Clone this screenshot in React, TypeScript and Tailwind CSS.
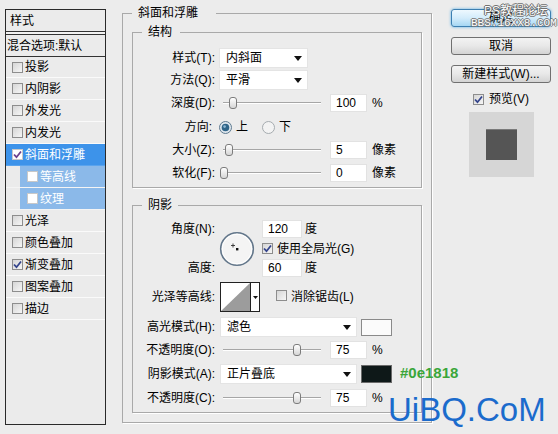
import React from "react";

const Tri = () => (
  <svg width="8" height="5" viewBox="0 0 8 5" className="shrink-0">
    <path d="M0 0H8L4 5Z" fill="#111" />
  </svg>
);

function Box({ checked = false, white = false, color = "#34448c" }: { checked?: boolean; white?: boolean; color?: string }) {
  return (
    <span
      className={
        white
          ? "inline-flex w-[11px] h-[11px] shrink-0 items-center justify-center border border-[#c8c8c8] bg-white"
          : "inline-flex w-[11px] h-[11px] shrink-0 items-center justify-center border border-[#8d8d8d] bg-linear-to-br from-[#d6d6d6] to-[#f6f6f6]"
      }
    >
      {checked && (
        <svg width="9" height="9" viewBox="0 0 9 9">
          <path d="M1 4.5L3.5 7.2L8 1.5" fill="none" stroke={color} strokeWidth="1.8" />
        </svg>
      )}
    </span>
  );
}

function Slider({ thumb }: { thumb: string }) {
  return (
    <div className="relative ml-[8px] w-[98px] h-[14px] shrink-0">
      <div className="absolute left-0 right-0 top-[6px] h-[2px] border-t border-[#a6a6a6] border-b border-b-white" />
      <div className={"absolute top-[1px] w-[8px] h-[12px] rounded-[3px] border border-[#7c7c7c] bg-linear-to-b from-white to-[#d6d6d6] " + thumb} />
    </div>
  );
}

function Input({ v, w = "w-[37px]", ml = "ml-[9px]" }: { v: string; w?: string; ml?: string }) {
  return (
    <div className={"h-[18px] bg-white border border-[#e2e2e2] pl-[5px] flex items-center shrink-0 " + w + " " + ml}>{v}</div>
  );
}

function Label({ children }: { children: React.ReactNode }) {
  return <span className="w-[82px] shrink-0 text-right">{children}</span>;
}

function Select({ v, w }: { v: string; w: string }) {
  return (
    <div className={"h-[20px] bg-white border border-[#e4e4e4] flex items-center justify-between pl-[6px] pr-[5px] shrink-0 " + w}>
      <span>{v}</span>
      <Tri />
    </div>
  );
}

function Radio({ on }: { on: boolean }) {
  return (
    <svg width="13" height="13" viewBox="0 0 13 13" className="shrink-0">
      {on ? (
        <>
          <circle cx="6.5" cy="6.5" r="6" fill="#dfe7ee" stroke="#5f7b90" />
          <circle cx="6.5" cy="6.5" r="3.8" fill="#2f6488" />
          <circle cx="5.6" cy="5.6" r="1.3" fill="#8db6d2" />
        </>
      ) : (
        <circle cx="6.5" cy="6.5" r="6" fill="#f3f3f3" stroke="#a5abaf" />
      )}
    </svg>
  );
}

const items: { t: string; sel?: boolean; sub?: boolean; checked?: boolean }[] = [
  { t: "投影" },
  { t: "内阴影" },
  { t: "外发光" },
  { t: "内发光" },
  { t: "斜面和浮雕", sel: true, checked: true },
  { t: "等高线", sub: true },
  { t: "纹理", sub: true },
  { t: "光泽" },
  { t: "颜色叠加" },
  { t: "渐变叠加", checked: true },
  { t: "图案叠加" },
  { t: "描边" },
];

function LeftPanel() {
  return (
    <div className="ml-[5px] mt-[9px] w-[101px] h-[416px] shrink-0 border border-[#2a2a2a] bg-[#ebebeb] flex flex-col">
      <div className="h-[22px] border-b border-[#333] pl-[4px] flex items-center">样式</div>
      <div className="h-[2px] bg-[#f2f2f2]" />
      <div className="h-[23px] border-y border-[#333] pl-[1px] flex items-center">混合选项:默认</div>
      {items.map((it, i) => {
        const h = i === 0 ? "h-[21px]" : "h-[22px]";
        if (it.sel)
          return (
            <div key={it.t} className={h + " bg-[#3d93ea] text-white flex items-center gap-[2px] pl-[6px] border-b border-[#5aa4ee]"}>
              <Box checked white color="#6b3f8c" />
              <span>{it.t}</span>
            </div>
          );
        if (it.sub)
          return (
            <div key={it.t} className={h + " flex border-b border-[#f4f4f4]"}>
              <div className="ml-[14px] flex-1 bg-[#8bb9e9] text-white flex items-center gap-[2px] pl-[7px]">
                <Box white />
                <span>{it.t}</span>
              </div>
            </div>
          );
        return (
          <div key={it.t} className={h + " flex items-center gap-[2px] pl-[6px] border-b border-[#fafafa]"}>
            <Box checked={it.checked} />
            <span>{it.t}</span>
          </div>
        );
      })}
    </div>
  );
}

function Main() {
  return (
    <fieldset className="ml-[16px] mt-[5px] w-[310px] shrink-0 border border-[#a9a9a9] shadow-[1px_1px_0_#fff] min-w-0">
      <legend className="ml-[9px] pl-[6px] pr-[18px] leading-[16px]">斜面和浮雕</legend>
      <div className="px-[9px] pt-[3px] pb-[9px]">
        <fieldset className="border border-[#a9a9a9] shadow-[1px_1px_0_#fff] min-w-0">
          <legend className="ml-[9px] pl-[6px] pr-[8px] leading-[16px]">结构</legend>
          <div className="pt-[7px] pb-[2px] flex flex-col">
            <div className="h-[22px] flex items-center">
              <Label>样式(T):</Label>
              <div className="ml-[4px]"><Select v="内斜面" w="w-[89px]" /></div>
            </div>
            <div className="h-[22px] flex items-center">
              <Label>方法(Q):</Label>
              <div className="ml-[4px]"><Select v="平滑" w="w-[89px]" /></div>
            </div>
            <div className="h-[24px] flex items-center">
              <Label>深度(D):</Label>
              <Slider thumb="left-[6px]" />
              <Input v="100" />
              <span className="ml-[5px]">%</span>
            </div>
            <div className="h-[24px] flex items-center">
              <span className="w-[79px] shrink-0 text-right">方向:</span>
              <span className="ml-[7px]"><Radio on /></span>
              <span className="ml-[4px]">上</span>
              <span className="ml-[14px]"><Radio on={false} /></span>
              <span className="ml-[4px]">下</span>
            </div>
            <div className="h-[22px] flex items-center">
              <Label>大小(Z):</Label>
              <Slider thumb="left-[2px]" />
              <Input v="5" />
              <span className="ml-[5px]">像素</span>
            </div>
            <div className="h-[24px] flex items-center">
              <Label>软化(F):</Label>
              <Slider thumb="left-[-3px]" />
              <Input v="0" />
              <span className="ml-[5px]">像素</span>
            </div>
          </div>
        </fieldset>

        <fieldset className="mt-[9px] border border-[#a9a9a9] shadow-[1px_1px_0_#fff] min-w-0">
          <legend className="ml-[9px] pl-[6px] pr-[6px] leading-[16px]">阴影</legend>
          <div className="pt-[7px] pb-[2px] flex flex-col">
            <div className="h-[57px] flex items-center">
              <div className="w-[82px] h-[57px] shrink-0 flex flex-col justify-between items-end">
                <span className="h-[18px] leading-[18px]">角度(N):</span>
                <span className="h-[18px] leading-[18px]">高度:</span>
              </div>
              <svg width="36" height="36" viewBox="0 0 36 36" className="ml-[4px] shrink-0">
                <circle cx="18" cy="18" r="16.3" fill="#f4f4f4" stroke="#62768a" strokeWidth="1.6" />
                <circle cx="18" cy="18" r="14.8" fill="none" stroke="#ffffff" strokeWidth="1" />
                <path d="M14 12.5V16.5M12 14.5H16" stroke="#333" strokeWidth="0.9" />
                <rect x="17" y="17" width="2.4" height="2.4" fill="#111" />
              </svg>
              <div className="ml-[7px] flex flex-col">
                <div className="h-[18px] flex items-center">
                  <Input v="120" w="w-[40px]" ml="ml-0" />
                  <span className="ml-[3px]">度</span>
                </div>
                <div className="h-[21px] flex items-center">
                  <Box checked />
                  <span className="ml-[4px]">使用全局光(G)</span>
                </div>
                <div className="h-[18px] flex items-center">
                  <Input v="60" w="w-[40px]" ml="ml-0" />
                  <span className="ml-[3px]">度</span>
                </div>
              </div>
            </div>
            <div className="mt-[5px] h-[30px] flex items-center">
              <Label>光泽等高线:</Label>
              <div className="ml-[5px] w-[40px] h-[30px] border border-[#222] flex bg-white shrink-0">
                <svg width="29" height="28" viewBox="0 0 29 28" className="shrink-0">
                  <path d="M0 28L29 0V28Z" fill="#9c9c9c" />
                </svg>
                <div className="flex-1 border-l border-[#222] flex items-center justify-center">
                  <svg width="5" height="3" viewBox="0 0 5 3"><path d="M0 0H5L2.5 3Z" fill="#111" /></svg>
                </div>
              </div>
              <span className="ml-[16px]"><Box /></span>
              <span className="ml-[4px]">消除锯齿(L)</span>
            </div>
            <div className="mt-[4px] h-[22px] flex items-center">
              <Label>高光模式(H):</Label>
              <div className="ml-[5px]"><Select v="滤色" w="w-[137px]" /></div>
              <div className="ml-[4px] w-[31px] h-[17px] bg-[#fbfbfb] border border-[#8a8a8a] shrink-0" />
            </div>
            <div className="h-[24px] flex items-center">
              <Label>不透明度(O):</Label>
              <Slider thumb="left-[70px]" />
              <Input v="75" />
              <span className="ml-[5px]">%</span>
            </div>
            <div className="h-[24px] flex items-center">
              <Label>阴影模式(A):</Label>
              <div className="ml-[5px]"><Select v="正片叠底" w="w-[137px]" /></div>
              <div className="ml-[4px] w-[31px] h-[18px] bg-[#0e1818] border border-[#6a6a6a] shrink-0" />
            </div>
            <div className="h-[24px] flex items-center">
              <Label>不透明度(C):</Label>
              <Slider thumb="left-[70px]" />
              <Input v="75" />
              <span className="ml-[5px]">%</span>
            </div>
          </div>
        </fieldset>
      </div>
    </fieldset>
  );
}

function Btn({ children, primary = false, mt = "" }: { children: React.ReactNode; primary?: boolean; mt?: string }) {
  return (
    <div
      className={
        (primary
          ? "border-[#3c7fb1] bg-linear-to-b from-[#eef8fe] via-[#d3ecfb] to-[#a6d7f3] shadow-[0_0_3px_#55aee6] "
          : "border-[#707070] bg-linear-to-b from-[#f3f3f3] via-[#e8e8e8] to-[#d4d4d4] ") +
        "w-full h-[18px] rounded-[3px] border flex items-center justify-center text-[12px] leading-none " +
        mt
      }
    >
      {children}
    </div>
  );
}

function Right() {
  return (
    <div className="ml-[19px] mt-[9px] w-[100px] shrink-0 flex flex-col items-center">
      <Btn primary>确定</Btn>
      <Btn mt="mt-[10px]">取消</Btn>
      <Btn mt="mt-[10px]">新建样式(W)...</Btn>
      <div className="mt-[9px] h-[14px] flex items-center gap-[5px]">
        <Box checked />
        <span>预览(V)</span>
      </div>
      <div className="mt-[6px] w-[65px] h-[65px] bg-[#d6d6d6] flex items-center justify-center">
        <div className="w-[31px] h-[31px] bg-[#555555] border-t border-[#7a7a7a]" />
      </div>
    </div>
  );
}

export default function App() {
  return (
    <div className="relative w-[558px] h-[434px] overflow-hidden bg-[#ececec] text-[12px] text-black flex items-start font-['Liberation_Sans','Noto_Sans_CJK_SC',sans-serif]">
      <LeftPanel />
      <Main />
      <Right />
      <span className="absolute left-[484px] top-[4px] text-[12px] leading-[14px] text-white [text-shadow:0_0_1px_#444,1px_0_0_#777,-1px_0_0_#777,0_1px_0_#777,0_-1px_0_#777]">
        PS教程论坛
      </span>
      <span className="absolute left-[471px] top-[17px] text-[11px] leading-[12px] text-white font-['Liberation_Mono',monospace] [text-shadow:1px_0_0_#777,-1px_0_0_#777,0_1px_0_#777,0_-1px_0_#777]">
        BBS.16XX8.COM
      </span>
      <span className="absolute left-[400px] top-[365px] text-[15px] leading-none font-bold text-[#3aa63a]">#0e1818</span>
      <span className="absolute left-[388px] top-[393px] text-[33px] leading-none text-[#1b6bcc]">UiBQ.CoM</span>
    </div>
  );
}
